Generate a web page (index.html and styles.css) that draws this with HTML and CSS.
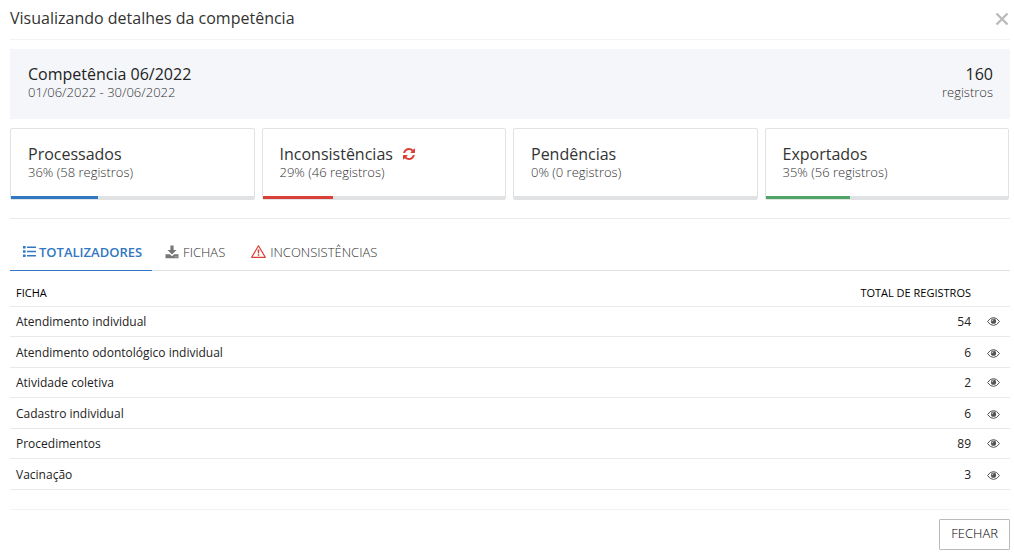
FILE: index.html
```html
<!DOCTYPE html>
<html lang="pt-BR">
<head>
<meta charset="utf-8">
<meta name="viewport" content="width=device-width, initial-scale=1">
<title>Visualizando detalhes da competência</title>
<link rel="stylesheet" href="styles.css">
</head>
<body>
<svg class="sprite" aria-hidden="true">
  <symbol id="eye" viewBox="0 0 13 9"><path d="M.6 4.500Q3 .6 6.500 .6T12.400 4.500Q10 8.400 6.500 8.400T.6 4.500z" fill="none" stroke="currentColor" stroke-width="1"/><circle cx="6.500" cy="4.200" r="2.600" fill="currentColor"/><path d="M5 4.200Q5 2.700 6.500 2.700" fill="none" stroke="#fff" stroke-width=".8"/></symbol>
</svg>
<main class="dialog">
  <header class="dialog-header">
    <h1 class="title">Visualizando detalhes da competência</h1>
    <button class="close" type="button" aria-label="Fechar janela"><svg width="14" height="14" viewBox="0 0 14 14"><path d="M1.500 1.500l11 11M12.500 1.500l-11 11" fill="none" stroke="currentColor" stroke-width="2.400"/></svg></button>
  </header>

  <section class="summary">
    <div>
      <h2 class="heading">Competência 06/2022</h2>
      <p class="detail">01/06/2022 - 30/06/2022</p>
    </div>
    <div class="summary-total">
      <p class="heading">160</p>
      <p class="detail">registros</p>
    </div>
  </section>

  <section class="cards">
    <article class="card">
      <h2 class="heading">Processados</h2>
      <p class="detail">36% (58 registros)</p>
      <div class="bar"><div class="fill blue" style="width:36%"></div></div>
    </article>
    <article class="card">
      <h2 class="heading">Inconsistências
        <button class="refresh" type="button" aria-label="Atualizar"><svg width="12" height="12" viewBox="128 128 1536 1536"><path fill="currentColor" d="M1639 1056q0 5-1 7-64 268-268 434.500t-478 166.500q-146 0-282.500-55t-243.500-157l-129 129q-19 19-45 19t-45-19-19-45v-448q0-26 19-45t45-19h448q26 0 45 19t19 45-19 45l-137 137q71 66 161 102t187 36q134 0 250-65t186-179q11-17 53-117 8-23 30-23h192q13 0 22.500 9.500t9.500 22.500zm25-800v448q0 26-19 45t-45 19h-448q-26 0-45-19t-19-45 19-45l138-138q-148-137-349-137-134 0-250 65t-186 179q-11 17-53 117-8 23-30 23h-199q-13 0-22.500-9.500t-9.500-22.500v-7q65-268 270-434.500t480-166.500q146 0 284 55.500t245 156.500l130-129q19-19 45-19t45 19 19 45z"/></svg></button>
      </h2>
      <p class="detail">29% (46 registros)</p>
      <div class="bar"><div class="fill red" style="width:29%"></div></div>
    </article>
    <article class="card">
      <h2 class="heading">Pendências</h2>
      <p class="detail">0% (0 registros)</p>
      <div class="bar"><div class="fill" style="width:0%"></div></div>
    </article>
    <article class="card">
      <h2 class="heading">Exportados</h2>
      <p class="detail">35% (56 registros)</p>
      <div class="bar"><div class="fill green" style="width:35%"></div></div>
    </article>
  </section>

  <nav class="tabs" role="tablist">
    <button class="tab active" type="button" role="tab" aria-selected="true"><svg width="13" height="11" viewBox="0 0 13 11"><path fill="currentColor" d="M0 0h2.600v2.600H0zM0 4.200h2.600v2.600H0zM0 8.400h2.600V11H0zM4 .5h9v1.600H4zM4 4.700h9v1.600H4zM4 8.900h9v1.600H4z"/></svg>TOTALIZADORES</button>
    <button class="tab" type="button" role="tab" aria-selected="false"><svg width="14" height="14" viewBox="0 0 14 14"><path fill="currentColor" d="M5.400 .5h3.200v4.500h2.900L7 9.500 2.500 5h2.900zM.5 9.300h4.300L7 11.300l2.200-2h4.300v4H.5z"/><path fill="#fff" d="M9.800 11.600h.8v.7h-.8zM11.600 11.600h.8v.7h-.8z"/></svg>FICHAS</button>
    <button class="tab" type="button" role="tab" aria-selected="false"><svg class="warning" width="15" height="13" viewBox="0 0 15 13"><path d="M7.500 .8L14.300 12.300H.7z" fill="none" stroke="currentColor" stroke-width="1.200" stroke-linejoin="round"/><path d="M6.600 4.500h1.800L8.100 8.500H6.900zM6.700 9.200h1.600v1.500H6.700z" fill="currentColor"/></svg>INCONSISTÊNCIAS</button>
  </nav>

  <table class="records">
    <thead><tr><th scope="col">FICHA</th><th scope="col" class="number">TOTAL DE REGISTROS</th><td class="action"></td></tr></thead>
    <tbody>
      <tr><td>Atendimento individual</td><td class="number">54</td><td class="action"><button class="view" type="button" aria-label="Ver Atendimento individual"><svg width="13" height="9"><use href="#eye"/></svg></button></td></tr>
      <tr><td>Atendimento odontológico individual</td><td class="number">6</td><td class="action"><button class="view" type="button" aria-label="Ver Atendimento odontológico individual"><svg width="13" height="9"><use href="#eye"/></svg></button></td></tr>
      <tr><td>Atividade coletiva</td><td class="number">2</td><td class="action"><button class="view" type="button" aria-label="Ver Atividade coletiva"><svg width="13" height="9"><use href="#eye"/></svg></button></td></tr>
      <tr><td>Cadastro individual</td><td class="number">6</td><td class="action"><button class="view" type="button" aria-label="Ver Cadastro individual"><svg width="13" height="9"><use href="#eye"/></svg></button></td></tr>
      <tr><td>Procedimentos</td><td class="number">89</td><td class="action"><button class="view" type="button" aria-label="Ver Procedimentos"><svg width="13" height="9"><use href="#eye"/></svg></button></td></tr>
      <tr><td>Vacinação</td><td class="number">3</td><td class="action"><button class="view" type="button" aria-label="Ver Vacinação"><svg width="13" height="9"><use href="#eye"/></svg></button></td></tr>
    </tbody>
  </table>

  <footer class="dialog-footer"><button class="button" type="button">FECHAR</button></footer>
</main>
</body>
</html>
```
FILE: styles.css
```css
* { box-sizing: border-box; }
body { margin: 0; background: #fff; color: #222; font-family: "Open Sans", sans-serif; font-size: 13px; }
h1, h2, p { margin: 0; font-weight: 400; }
button { padding: 0; border: 0; background: none; color: inherit; font: inherit; cursor: pointer; }
svg { display: block; flex: none; }
.sprite { position: absolute; width: 0; height: 0; }
.dialog { padding: 0 4px 8px 10px; }
.dialog-header { display: flex; align-items: center; justify-content: space-between; height: 40px; padding: 0 1px 3px 0; border-bottom: 1px solid #f3f3f3; }
.title { font-size: 16px; line-height: 24px; color: #333; }
.close { padding-top: 2px; color: #bbb; }
.summary { display: flex; justify-content: space-between; margin-top: 9px; padding: 16px 17px 18px 18px; background: #f5f6fa; }
.summary-total { text-align: right; }
.heading { display: flex; align-items: center; font-size: 16px; line-height: 18px; }
.summary-total .heading { justify-content: flex-end; }
.detail { line-height: 18px; font-weight: 300; color: #333; }
.cards { display: grid; grid-template-columns: repeat(4, 1fr); gap: 7px; margin-top: 9px; padding: 0 1px 18px 0; border-bottom: 1px solid #e9e9e9; }
.card { border: 1px solid #e1e2e4; border-radius: 2px; }
.card .heading { margin: 16px 17px 0; color: #333; }
.card .detail { margin: 0 17px 15px; }
.refresh { margin-left: 10px; color: #db4038; }
.bar { height: 3px; background: #e1e2e4; }
.fill { height: 3px; }
.blue { background: #3277c2; }
.red { background: #d9403a; }
.green { background: #50a466; }
.tabs { display: flex; margin-top: 16px; border-bottom: 1px solid #dfe0e3; }
.tab { display: flex; align-items: center; gap: 4px; height: 36px; margin-bottom: -1px; padding: 0 13px 2px; border-bottom: 1px solid transparent; color: #333; font-weight: 300; }
.tab svg { color: #777; }
.tab.active { gap: 3px; padding-right: 10px; border-color: #3277c2; font-weight: 600; }
.tab.active, .tab.active svg { color: #3277c2; }
.tab .warning { color: #db4038; }
.records { width: 100%; border-collapse: separate; border-spacing: 0; font-size: 12px; line-height: 18px; }
.records th, .records td { height: 30px; padding: 0 6px; border-bottom: 1px solid #e9e9e9; text-align: left; }
.records thead th, .records thead td { height: 36px; padding-top: 9px; font-size: 11px; font-weight: 500; color: #000; }
.records tbody tr:nth-child(even) td { height: 31px; padding-top: 2px; }
.records .number { text-align: right; }
.records .action { width: 33px; padding: 0 10px; }
.view { display: block; color: #555; }
.dialog-footer { display: flex; justify-content: flex-end; margin-top: 19px; padding-top: 9px; border-top: 1px solid #f3f3f3; }
.button { height: 31px; padding: 0 11px 3px; border: 1px solid #bbb; border-radius: 1px; background: #fff; font-weight: 300; color: #000; }
```
